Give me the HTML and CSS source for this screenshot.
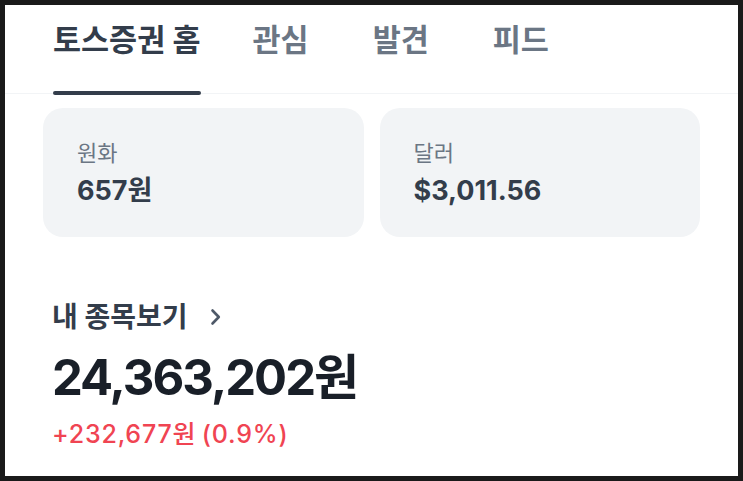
FILE: index.html
```html
<!DOCTYPE html>
<html lang="ko">
<head>
<meta charset="utf-8">
<title>토스증권 홈</title>
<link rel="stylesheet" href="styles.css">
</head>
<body>
<div class="screen">
  <nav class="tabs">
    <a class="tab tab-active"><span class="tab-label">토스증권 홈</span><span class="indicator"></span></a>
    <a class="tab"><span class="tab-label">관심</span></a>
    <a class="tab"><span class="tab-label">발견</span></a>
    <a class="tab"><span class="tab-label">피드</span></a>
  </nav>
  <section class="balances">
    <div class="card">
      <div class="card-label">원화</div>
      <div class="card-value">657원</div>
    </div>
    <div class="card">
      <div class="card-label">달러</div>
      <div class="card-value">$3,011.56</div>
    </div>
  </section>
  <section class="assets">
    <div class="assets-link">
      <span>내 종목보기</span>
      <svg class="chevron" width="12" height="18" viewBox="0 0 12 18"><path d="M2.5 2.5 L8.8 9 L2.5 15.5" fill="none" stroke="#4e5968" stroke-width="2.6" stroke-linecap="round" stroke-linejoin="round"/></svg>
    </div>
    <div class="total">24,363,202원</div>
    <div class="change">+232,677원 (0.9%)</div>
  </section>
</div>
</body>
</html>
```
FILE: styles.css
```css
* { box-sizing: border-box; }
html, body { margin: 0; padding: 0; }
body {
  background: #1a1a1a;
  font-family: Inter, "Noto Sans CJK KR", sans-serif;
}
.screen {
  margin: 5px;
  width: 733px;
  height: 471px;
  background: #ffffff;
  overflow: hidden;
}
.tabs {
  display: flex;
  align-items: flex-start;
  height: 89px;
  padding-left: 45px;
  border-bottom: 1px solid #f2f4f6;
  gap: 58px;
}
.tab {
  display: flex;
  flex-direction: column;
  height: 90px;
  padding: 0 3px;
  color: #6b7684;
  font-size: 30.5px;
  font-weight: 700;
  line-height: 36px;
}
.tab-label { padding-top: 17px; white-space: nowrap; }
.tab-active { color: #333d4b; margin-right: -12px; }
.indicator {
  margin-top: auto;
  height: 4px;
  border-radius: 2px;
  background: #333d4b;
}
.balances {
  display: grid;
  grid-template-columns: 1fr 1fr;
  gap: 16px;
  padding: 14px 38px 0;
}
.card {
  height: 129px;
  border-radius: 20px;
  background: #f2f4f6;
  padding: 31px 34px 0;
}
.card-label {
  font-size: 22px;
  line-height: 28px;
  color: #6b7684;
}
.card-value {
  margin-top: 8px;
  font-size: 27px;
  font-weight: 700;
  line-height: 32px;
  color: #333d4b;
}
.assets {
  padding: 63px 47px 0;
}
.assets-link {
  display: flex;
  align-items: center;
  gap: 23px;
  font-size: 28px;
  font-weight: 700;
  line-height: 34px;
  color: #333d4b;
}
.total {
  margin-top: 16px;
  font-size: 49px;
  font-weight: 700;
  line-height: 56px;
  color: #191f28;
  letter-spacing: -2px;
}
.change {
  margin-top: 13px;
  font-size: 25px;
  font-weight: 500;
  line-height: 30px;
  color: #f04452;
  letter-spacing: 0.8px;
  word-spacing: -2px;
}
```
